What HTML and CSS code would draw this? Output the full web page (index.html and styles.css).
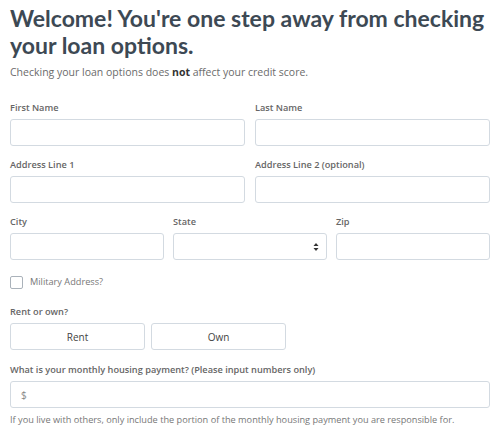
FILE: index.html
```
<!DOCTYPE html>
<html lang="en">
<head>
    <meta charset="UTF-8">
    <meta name="viewport" content="width=device-width, initial-scale=1.0">
    <title>Check your loan options</title>
    <link rel="stylesheet" href="styles.css">
</head>
<body>

<section class="loan-form">
    <h1>Welcome! You're one step away from checking your loan options.</h1>
    <p class="subtext">Checking your loan options does <b>not</b> affect your credit score.</p>

    <div class="row two first">
        <div class="field">
            <label>First Name</label>
            <input type="text">
        </div>
        <div class="field">
            <label>Last Name</label>
            <input type="text">
        </div>
    </div>

    <div class="row two">
        <div class="field">
            <label>Address Line 1</label>
            <input type="text">
        </div>
        <div class="field">
            <label>Address Line 2 (optional)</label>
            <input type="text">
        </div>
    </div>

    <div class="row three">
        <div class="field">
            <label>City</label>
            <input type="text">
        </div>
        <div class="field">
            <label>State</label>
            <div class="select-wrap">
                <select><option></option></select>
                <svg class="select-arrows" width="6" height="10" viewBox="0 0 6 10">
                    <path d="M3 1 L5.5 4 L0.5 4 Z" fill="#333"/>
                    <path d="M3 9 L5.5 6 L0.5 6 Z" fill="#333"/>
                </svg>
            </div>
        </div>
        <div class="field">
            <label>Zip</label>
            <input type="text">
        </div>
    </div>

    <div class="checkbox-row">
        <span class="checkbox"></span>
        <span>Military Address?</span>
    </div>

    <div class="field rent-own">
        <label>Rent or own?</label>
        <div class="toggle-group">
            <button class="toggle-btn">Rent</button>
            <button class="toggle-btn">Own</button>
        </div>
    </div>

    <div class="field payment">
        <label>What is your monthly housing payment? (Please input numbers only)</label>
        <input type="text" placeholder="$">
        <p class="help">If you live with others, only include the portion of the monthly housing payment you are responsible for.</p>
    </div>
</section>

</body>
</html>
```

FILE: styles.css
```
/* Page */
body {
    margin: 0;
    background-color: #fff;
    font-family: "Open Sans", "Liberation Sans", sans-serif;
    color: #555;
}

.loan-form {
    padding: 0 10px;
}

.loan-form h1 {
    font-family: "Lato", "Open Sans", sans-serif;
    font-size: 23px;
    font-weight: 700;
    line-height: 27px;
    color: #3d4954;
    margin: 5px 0 0;
}

.subtext {
    font-size: 10.5px;
    color: #6b6b6b;
    margin: 6px 0 0;
    line-height: 14px;
}

.subtext b {
    color: #333;
}

/* Rows */
.row {
    display: grid;
    gap: 10px;
    margin-top: 12px;
}

.row.first {
    margin-top: 22px;
}

.row.two {
    grid-template-columns: 1fr 1fr;
}

.row.three {
    grid-template-columns: 1fr 1fr 1fr;
    gap: 9px;
}

.field label {
    display: block;
    font-size: 9.2px;
    font-weight: 600;
    line-height: 14px;
    color: #666;
    margin-bottom: 4px;
}

.field input,
.field select {
    display: block;
    width: 100%;
    box-sizing: border-box;
    height: 27px;
    border: 1px solid #d3dae1;
    border-radius: 3px;
    background: #fff;
    padding: 0 10px;
    font-family: inherit;
    font-size: 10px;
    color: #555;
    outline: none;
}

.field input::placeholder {
    color: #888;
}

.select-wrap {
    position: relative;
}

.field select {
    appearance: none;
    -webkit-appearance: none;
}

.select-arrows {
    position: absolute;
    right: 8px;
    top: 9px;
}

/* Checkbox */
.checkbox-row {
    display: flex;
    align-items: center;
    gap: 7px;
    margin-top: 15px;
    line-height: 14px;
    font-size: 9.2px;
    color: #777;
}

.checkbox {
    width: 11px;
    height: 11px;
    border: 1px solid #aab2ba;
    border-radius: 2px;
}

.rent-own {
    margin-top: 16px;
}

/* Rent / own */
.toggle-group {
    display: flex;
    gap: 6px;
}

.toggle-btn {
    width: 135px;
    height: 27px;
    border: 1px solid #d3dae1;
    border-radius: 3px;
    background: #fff;
    font-family: inherit;
    font-size: 10px;
    color: #444;
    cursor: pointer;
}

.payment {
    margin-top: 13px;
}

.help {
    font-size: 9.2px;
    color: #777;
    margin: 5px 0 0;
    line-height: 14px;
}
```
